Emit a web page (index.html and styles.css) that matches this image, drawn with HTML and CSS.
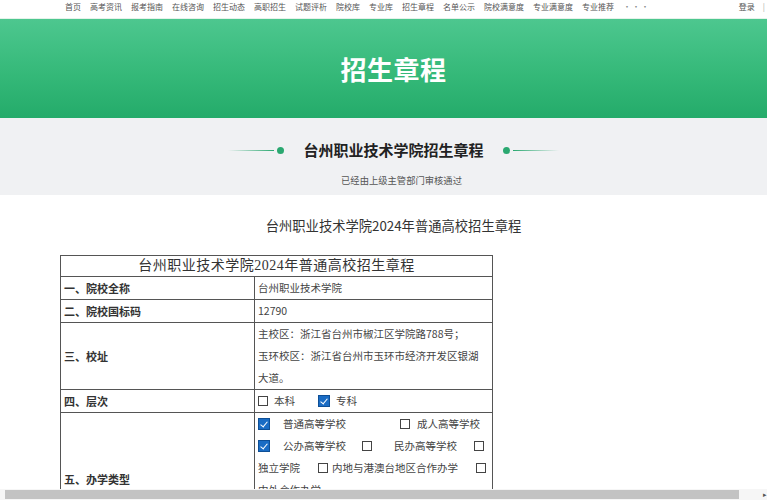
FILE: index.html
```html
<!DOCTYPE html>
<html lang="zh-CN">
<head>
<meta charset="utf-8">
<title>台州职业技术学院招生章程</title>
<link rel="stylesheet" href="styles.css">
</head>
<body>
<header class="topnav">
  <nav class="nav-links">
    <a>首页</a><a>高考资讯</a><a>报考指南</a><a>在线咨询</a><a>招生动态</a><a>高职招生</a><a>试题评析</a><a>院校库</a><a>专业库</a><a>招生章程</a><a>名单公示</a><a>院校满意度</a><a>专业满意度</a><a>专业推荐</a><a class="more">•••</a>
  </nav>
  <div class="login">登录<span class="sep">|</span></div>
</header>

<section class="banner">
  <h1>招生章程</h1>
</section>

<section class="subhead">
  <div class="subhead-title">
    <span class="deco deco-left"><i class="line"></i><i class="dot"></i></span>
    <h2>台州职业技术学院招生章程</h2>
    <span class="deco deco-right"><i class="dot"></i><i class="line"></i></span>
  </div>
  <p class="approved">已经由上级主管部门审核通过</p>
</section>

<main class="content">
  <h3 class="doc-title">台州职业技术学院2024年普通高校招生章程</h3>
  <table class="info">
    <colgroup><col class="c1"><col class="c2"></colgroup>
    <tr><th colspan="2" class="tt">台州职业技术学院2024年普通高校招生章程</th></tr>
    <tr><td class="lbl">一、院校全称</td><td class="val">台州职业技术学院</td></tr>
    <tr><td class="lbl">二、院校国标码</td><td class="val">12790</td></tr>
    <tr><td class="lbl">三、校址</td><td class="val">主校区：浙江省台州市椒江区学院路788号；<br>玉环校区：浙江省台州市玉环市经济开发区银湖<br>大道。</td></tr>
    <tr><td class="lbl">四、层次</td><td class="val">
      <div class="ln"><span class="cb"></span><span class="m6">本科</span><span class="cb on m23"></span><span class="m6">专科</span></div>
    </td></tr>
    <tr class="tall"><td class="lbl">五、办学类型</td><td class="val top">
      <div class="ln"><span class="cb on"></span><span class="m13">普通高等学校</span><span class="cb m54"></span><span class="m7">成人高等学校</span></div>
      <div class="ln"><span class="cb on"></span><span class="m13">公办高等学校</span><span class="cb m16"></span><span class="m22">民办高等学校</span><span class="cb m17"></span></div>
      <div class="ln"><span>独立学院</span><span class="cb m18"></span><span class="m4">内地与港澳台地区合作办学</span><span class="cb m18"></span></div>
      <div class="ln"><span>中外合作办学</span></div>
    </td></tr>
  </table>
</main>

<div class="hscroll"><div class="thumb"></div><span class="arrow">▸</span></div>
</body>
</html>
```

FILE: styles.css
```css
* { box-sizing: border-box; }
html, body { margin: 0; padding: 0; overflow: hidden; }
html { width: 767px; height: 500px; }
body {
  font-family: "Noto Sans CJK SC", "Noto Sans", sans-serif;
  color: #333;
  background: #fff;
  width: 787px;
  height: 500px;
}

/* top navigation */
.topnav {
  height: 19px;
  display: flex;
  align-items: flex-start;
  padding: 1px 22px 0 65px;
  font-size: 8px;
  line-height: 12px;
  color: #555;
  background: #fff;
  border-bottom: 1px solid #e4f3ea;
}
.nav-links { display: flex; gap: 9px; }
.nav-links a { color: #555; white-space: nowrap; }
.nav-links .more { letter-spacing: 1px; color: #888; }
.login { margin-left: auto; white-space: nowrap; }
.login .sep { margin-left: 8px; color: #aaa; }

/* green banner */
.banner {
  height: 99px;
  background: linear-gradient(180deg, #4dc78f 0%, #35b979 55%, #24ab6a 100%);
  display: flex;
  align-items: center;
  justify-content: center;
}
.banner h1 {
  margin: 0;
  color: #fff;
  font-size: 26px;
  font-weight: 700;
  letter-spacing: 0.5px;
  line-height: 1;
}

/* grey sub heading */
.subhead {
  height: 77px;
  background: #f0f1f3;
  padding-top: 21px;
}
.subhead-title {
  display: flex;
  align-items: center;
  justify-content: center;
  height: 22px;
}
.subhead-title h2 {
  margin: 0 19px;
  font-size: 15px;
  font-weight: 700;
  color: #222;
  line-height: 22px;
}
.deco { display: flex; align-items: center; }
.deco .line { display: block; width: 46px; height: 1px; }
.deco .dot { display: block; width: 7px; height: 7px; border-radius: 50%; background: #2aa870; }
.deco-left .line { background: linear-gradient(90deg, rgba(42,168,112,0), #2aa870); margin-right: 3px; }
.deco-right .line { background: linear-gradient(90deg, #2aa870, rgba(42,168,112,0)); margin-left: 3px; }
.approved {
  margin: 12px 0 0;
  padding-left: 16px;
  text-align: center;
  font-size: 9.3px;
  line-height: 14px;
  color: #555;
}

/* main content */
.content {
  width: 667px;
  margin-left: 60px;
  padding-top: 21px;
}
.doc-title {
  margin: 0 0 19px;
  text-align: center;
  font-size: 13.3px;
  font-weight: 400;
  line-height: 20px;
  color: #333;
}
.info {
  border-collapse: collapse;
  width: 432px;
  table-layout: fixed;
}
.info .c1 { width: 194px; }
.info .c2 { width: 238px; }
.info td, .info th {
  border: 1px solid #555;
  padding: 0 3px;
  line-height: 22px;
}
.info .tt {
  font-family: "Liberation Serif", "Noto Sans CJK SC", serif;
  font-weight: 400;
  font-size: 14px;
  letter-spacing: 0.5px;
  line-height: 20px;
  color: #333;
  text-align: center;
}
.info .lbl {
  font-size: 11px;
  font-weight: 700;
  color: #333;
  vertical-align: middle;
}
.info .val {
  font-size: 10.5px;
  color: #444;
  vertical-align: middle;
  white-space: nowrap;
}
.info .val.top { vertical-align: top; }
.info .tall td { height: 133px; }
.ln { display: flex; align-items: center; height: 22px; white-space: nowrap; }

.cb {
  display: inline-block;
  width: 10px;
  height: 10px;
  border: 1px solid #444;
  background: #fff;
  flex: none;
}
.cb.on {
  width: 12px;
  height: 12px;
  border: 1px solid #0e4f96;
  background: #1a6cc4;
  position: relative;
}
.cb.on::after {
  content: "";
  position: absolute;
  left: 3px;
  top: 1px;
  width: 3px;
  height: 6px;
  border: solid #fff;
  border-width: 0 1.5px 1.5px 0;
  transform: rotate(40deg);
}
.m4 { margin-left: 4px; }
.m6 { margin-left: 6px; }
.m7 { margin-left: 7px; }
.m13 { margin-left: 13px; }
.m16 { margin-left: 16px; }
.m17 { margin-left: 17px; }
.m18 { margin-left: 18px; }
.m22 { margin-left: 22px; }
.m23 { margin-left: 23px; }
.m54 { margin-left: 54px; }

/* faux horizontal scrollbar overlaying the page bottom */
.hscroll {
  position: fixed;
  left: 0;
  bottom: 0;
  width: 767px;
  height: 11px;
  background: #f6f6f6;
}
.hscroll .thumb {
  position: absolute;
  left: 5px;
  top: 1px;
  width: 734px;
  height: 9px;
  background: #c3c3c3;
}
.hscroll .arrow {
  position: absolute;
  right: 0;
  top: 0;
  font-size: 7px;
  line-height: 11px;
  color: #555;
}
```
